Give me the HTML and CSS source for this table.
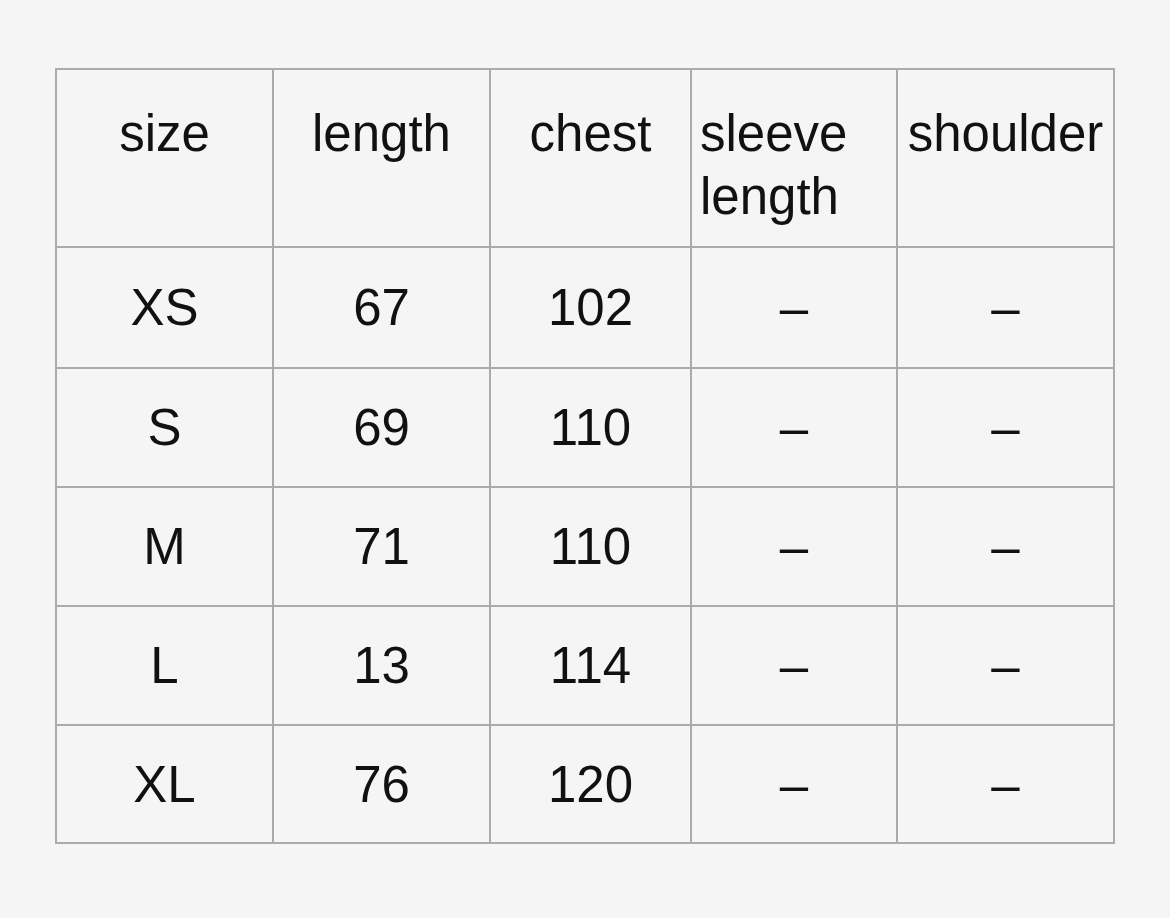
FILE: index.html
```html
<!DOCTYPE html>
<html>
<head>
<meta charset="utf-8">
<link rel="stylesheet" href="styles.css">
</head>
<body>
<div class="wrap">
<table class="sizes">
  <colgroup>
    <col class="c1"><col class="c2"><col class="c3"><col class="c4"><col class="c5">
  </colgroup>
  <thead>
    <tr class="head">
      <th>size</th>
      <th>length</th>
      <th>chest</th>
      <th class="left">sleeve<br>length</th>
      <th>shoulder</th>
    </tr>
  </thead>
  <tbody>
    <tr class="r1"><td>XS</td><td>67</td><td>102</td><td>–</td><td>–</td></tr>
    <tr class="r2"><td>S</td><td>69</td><td>110</td><td>–</td><td>–</td></tr>
    <tr class="r3"><td>M</td><td>71</td><td>110</td><td>–</td><td>–</td></tr>
    <tr class="r4"><td>L</td><td>13</td><td>114</td><td>–</td><td>–</td></tr>
    <tr class="r5"><td>XL</td><td>76</td><td>120</td><td>–</td><td>–</td></tr>
  </tbody>
</table>
</div>
</body>
</html>
```
FILE: styles.css
```css
html, body {
  margin: 0;
  padding: 0;
  background: #f5f5f5;
}
.wrap {
  padding: 68px 0 0 55px;
}
.sizes {
  border-collapse: collapse;
  table-layout: fixed;
  width: 1060px;
  font-family: "Liberation Sans", Arial, sans-serif;
  font-size: 51px;
  color: #111;
}
.c1 { width: 217px; }
.c2 { width: 217px; }
.c3 { width: 201px; }
.c4 { width: 206px; }
.c5 { width: 217px; }
.sizes th, .sizes td {
  border: 2px solid #ababab;
  padding: 0;
  text-align: center;
  font-weight: 400;
  line-height: 63px;
}
.sizes th {
  vertical-align: top;
  padding-top: 32px;
}
.sizes th.left {
  text-align: left;
  padding-left: 8px;
}
.head { height: 178px; }
.sizes td { vertical-align: middle; }
.r1 { height: 121px; }
.r2, .r3, .r4 { height: 119px; }
.r5 { height: 118px; }
```
